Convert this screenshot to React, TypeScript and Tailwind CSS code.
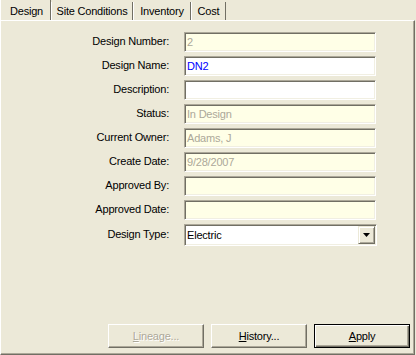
import React from "react";

interface FieldRow {
  label: string;
  value: string;
  kind: "readonly" | "edit" | "empty";
  blue?: boolean;
}

const ROWS: FieldRow[] = [
  { label: "Design Number:", value: "2", kind: "readonly" },
  { label: "Design Name:", value: "DN2", kind: "edit", blue: true },
  { label: "Description:", value: "", kind: "edit" },
  { label: "Status:", value: "In Design", kind: "readonly" },
  { label: "Current Owner:", value: "Adams, J", kind: "readonly" },
  { label: "Create Date:", value: "9/28/2007", kind: "readonly" },
  { label: "Approved By:", value: "", kind: "empty" },
  { label: "Approved Date:", value: "", kind: "empty" },
];

const sunken =
  "border border-t-[#ACA899] border-l-[#ACA899] border-r-white border-b-white shadow-[inset_1px_1px_0_#716F64,inset_-1px_-1px_0_#F1EFE2]";

function Tab({ label, width, active }: { label: string; width: string; active?: boolean }) {
  return (
    <div
      className={`${width} ${active ? "h-[20px] pt-[2px] pl-[2px]" : "h-[18px]"} flex items-center justify-center border-l border-l-white border-r border-r-[#716F64] whitespace-nowrap leading-[13px]`}
    >
      {label}
    </div>
  );
}

function Field({ row }: { row: FieldRow }) {
  const bg = row.kind === "edit" ? "bg-white" : "bg-[#FFFFE7]";
  const color = row.kind === "readonly" ? "text-[#ACA899]" : row.blue ? "text-[#0000FF]" : "text-black";
  return (
    <div className="flex items-center h-[20px]">
      <div className="w-[168px] text-right leading-[13px] -mt-[2px]">{row.label}</div>
      <div className={`ml-[15px] w-[192px] h-[20px] ${sunken} ${bg} ${color} pl-[2px] flex items-center leading-[13px]`}>
        {row.value}
      </div>
    </div>
  );
}

function Button({ label, hot, disabled, primary }: { label: string; hot: string; disabled?: boolean; primary?: boolean }) {
  const rest = label.slice(1);
  const frame = primary
    ? "border border-black shadow-[inset_1px_1px_0_#FFFFFF,inset_-1px_-1px_0_#716F64,inset_-2px_-2px_0_#ACA899]"
    : "border border-t-white border-l-white border-r-[#716F64] border-b-[#716F64] shadow-[inset_-1px_-1px_0_#ACA899]";
  return (
    <div
      className={`w-[96px] h-[24px] ${frame} bg-[#ECE9D8] flex items-center justify-center leading-[13px] ${
        disabled ? "text-[#ACA899] [text-shadow:1px_1px_0_#FFFFFF]" : "text-black"
      }`}
    >
      <span>
        <u>{hot}</u>
        {rest}
      </span>
    </div>
  );
}

export default function App() {
  return (
    <div className="w-[416px] h-[355px] bg-[#ECE9D8] flex flex-col font-['Liberation_Sans',Arial,sans-serif] text-[11px] tracking-[-0.2px] text-black overflow-hidden">
      <div className="flex items-end h-[20px]">
        <Tab label="Design" width="w-[51px]" active />
        <Tab label="Site Conditions" width="w-[82px]" />
        <Tab label="Inventory" width="w-[58px]" />
        <Tab label="Cost" width="w-[35px]" />
      </div>

      <div className="w-[415px] h-[335px] border-t border-l border-t-white border-l-white border-r border-b border-r-[#716F64] border-b-[#716F64] shadow-[inset_-1px_-1px_0_#ACA899] flex flex-col">
        <div className="pt-[11px] flex flex-col gap-[4px]">
          {ROWS.map((row) => (
            <Field key={row.label} row={row} />
          ))}
          <div className="flex items-center h-[22px]">
            <div className="w-[168px] text-right leading-[13px] -mt-[2px]">Design Type:</div>
            <div className={`ml-[15px] w-[193px] h-[22px] ${sunken} bg-white flex items-center`}>
              <span className="flex-1 pl-[2px] leading-[13px]">Electric</span>
              <div className="w-[17px] h-[18px] mr-[1px] bg-[#ECE9D8] border border-t-[#ECE9D8] border-l-[#ECE9D8] border-r-[#716F64] border-b-[#716F64] shadow-[inset_1px_1px_0_#FFFFFF,inset_-1px_-1px_0_#ACA899] flex items-center justify-center">
                <svg width="7" height="4" viewBox="0 0 7 4">
                  <path d="M0 0h7L3.5 4z" fill="#000" />
                </svg>
              </div>
            </div>
          </div>
        </div>

        <div className="mt-auto mb-[6px] ml-[107px] flex gap-[7px]">
          <Button label="Lineage..." hot="L" disabled />
          <Button label="History..." hot="H" />
          <Button label="Apply" hot="A" primary />
        </div>
      </div>
    </div>
  );
}
